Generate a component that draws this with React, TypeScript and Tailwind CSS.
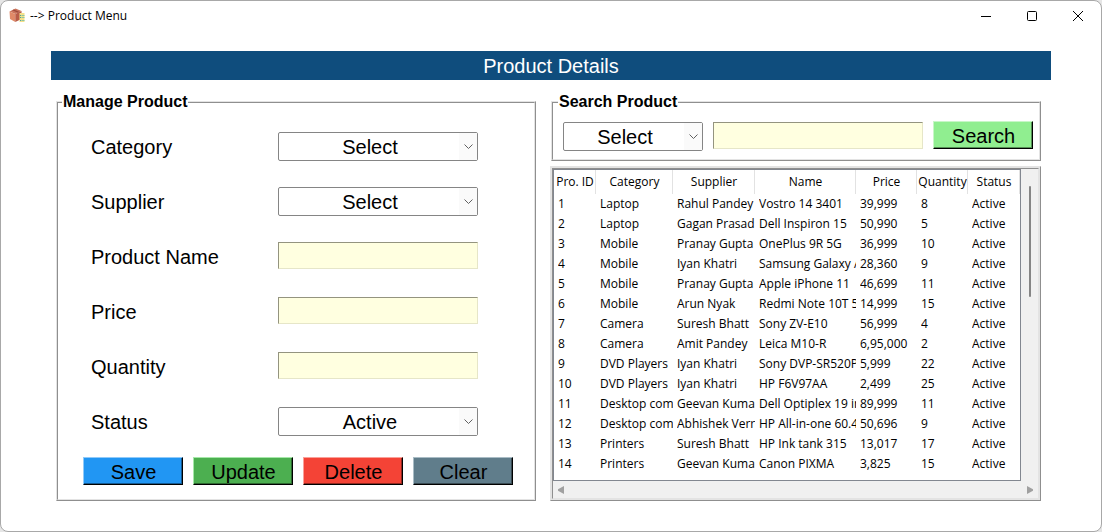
import type { ReactNode } from "react";

const LINE = "border-2 border-[#e3e3e3] [border-style:ridge]";

const products: string[][] = [
  ["1", "Laptop", "Rahul Pandey", "Vostro 14 3401", "39,999", "8", "Active"],
  ["2", "Laptop", "Gagan Prasad", "Dell Inspiron 15", "50,990", "5", "Active"],
  ["3", "Mobile", "Pranay Gupta", "OnePlus 9R 5G", "36,999", "10", "Active"],
  ["4", "Mobile", "Iyan Khatri", "Samsung Galaxy A", "28,360", "9", "Active"],
  ["5", "Mobile", "Pranay Gupta", "Apple iPhone 11", "46,699", "11", "Active"],
  ["6", "Mobile", "Arun Nyak", "Redmi Note 10T 5", "14,999", "15", "Active"],
  ["7", "Camera", "Suresh Bhatt", "Sony ZV-E10", "56,999", "4", "Active"],
  ["8", "Camera", "Amit Pandey", "Leica M10-R", "6,95,000", "2", "Active"],
  ["9", "DVD Players", "Iyan Khatri", "Sony DVP-SR520P", "5,999", "22", "Active"],
  ["10", "DVD Players", "Iyan Khatri", "HP F6V97AA", "2,499", "25", "Active"],
  ["11", "Desktop com", "Geevan Kuma", "Dell Optiplex 19 in", "89,999", "11", "Active"],
  ["12", "Desktop com", "Abhishek Verr", "HP All-in-one 60.4", "50,696", "9", "Active"],
  ["13", "Printers", "Suresh Bhatt", "HP Ink tank 315", "13,017", "17", "Active"],
  ["14", "Printers", "Geevan Kuma", "Canon PIXMA", "3,825", "15", "Active"],
];

const columns = ["Pro. ID", "Category", "Supplier", "Name", "Price", "Quantity", "Status"];

function Combo({ id, label, value, options }: { id: string; label?: string; value: string; options: string[] }) {
  return (
    <div className="relative h-[29px] w-full">
      <select
        id={id}
        aria-label={label}
        defaultValue={value}
        className="h-full w-full appearance-none rounded-xs border border-[#858585] bg-white pr-4 text-xl leading-6 text-black [text-align-last:center]"
      >
        {options.map((o) => (
          <option key={o}>{o}</option>
        ))}
      </select>
      <span className="pointer-events-none absolute inset-y-px right-px flex w-[18px] items-center justify-center bg-[#fafafa] pl-px">
        <svg width="9" height="5" viewBox="0 0 9 5" fill="none" stroke="#606060" strokeWidth="1">
          <path d="M0.5 0.5l4 4 4-4" />
        </svg>
      </span>
    </div>
  );
}

function Entry({ id, label }: { id: string; label?: string }) {
  return (
    <input
      id={id}
      aria-label={label}
      type="text"
      className="block h-[27px] w-full min-w-0 border border-t-[#94947f] border-r-[#e6e6c8] border-b-[#e6e6c8] border-l-[#94947f] bg-[#ffffe0] px-1 text-xl leading-6"
    />
  );
}

function ReliefButton({ color, children }: { color: string; children: ReactNode }) {
  return (
    <button
      type="button"
      className={`h-7 w-[100px] border border-r-black border-b-black pt-0.5 pl-px text-center text-xl leading-6 text-black ${color}`}
    >
      {children}
    </button>
  );
}

function Field({ id, label, children }: { id: string; label: string; children: ReactNode }) {
  return (
    <div className="flex h-[29px] items-start">
      <label htmlFor={id} className="w-[187px] text-xl leading-[31px]">
        {label}
      </label>
      <div className="w-[200px]">{children}</div>
    </div>
  );
}

function AppIcon() {
  return (
    <svg width="17" height="16" viewBox="0 0 17 16">
      <path d="M0.5 3.5L6.5 0.5l6 2.5-6.2 3z" fill="#c9735a" />
      <path d="M0.5 3.5l5.8 2.5v8L1 11z" fill="#e08a68" />
      <path d="M6.3 6l6.2-3v8l-6.2 3z" fill="#b85c47" />
      <path d="M3.2 2.3L9.1 4.8l1.3-.7L4.8 1.4z" fill="#9c4a3c" />
      <path d="M10.5 5h5v9h-5z" fill="#f5e08a" />
      <path d="M11 7.5h1M11 9.5h1M11 12.5h1" stroke="#4fa39a" />
      <path d="M12.5 7.5h3M12.5 9.5h3M12.5 12.5h3" stroke="#8fc7a0" />
    </svg>
  );
}

function TitleBar() {
  const button = "flex h-[30px] w-[46px] items-center justify-center";
  return (
    <header className="flex h-[30px] items-center pl-2">
      <AppIcon />
      <h1 className="ml-1 flex-1 font-['Open_Sans','Noto_Sans',sans-serif] text-xs">--&gt; Product Menu</h1>
      <button type="button" aria-label="Minimize" className={button}>
        <svg width="10" height="10" viewBox="0 0 10 10" stroke="#000">
          <path d="M0 5.5h10" />
        </svg>
      </button>
      <button type="button" aria-label="Maximize" className={button}>
        <svg width="10" height="10" viewBox="0 0 10 10" fill="none" stroke="#000">
          <rect x="0.5" y="0.5" width="9" height="9" rx="1" />
        </svg>
      </button>
      <button type="button" aria-label="Close" className={button}>
        <svg width="10" height="10" viewBox="0 0 10 10" stroke="#000">
          <path d="M0 0l10 10M10 0L0 10" />
        </svg>
      </button>
    </header>
  );
}

function ManageProduct() {
  return (
    <fieldset className={`${LINE} min-w-0 pb-3.5`}>
      <legend className="ml-1 px-px text-base leading-5 font-bold">Manage Product</legend>
      <div className="flex flex-col gap-[26px] pt-5 pl-[33px]">
        <Field id="category" label="Category">
          <Combo id="category" value="Select" options={["Select", "Laptop", "Mobile", "Camera", "Printers"]} />
        </Field>
        <Field id="supplier" label="Supplier">
          <Combo id="supplier" value="Select" options={["Select", "Rahul Pandey", "Gagan Prasad", "Iyan Khatri"]} />
        </Field>
        <Field id="name" label="Product Name">
          <Entry id="name" />
        </Field>
        <Field id="price" label="Price">
          <Entry id="price" />
        </Field>
        <Field id="quantity" label="Quantity">
          <Entry id="quantity" />
        </Field>
        <Field id="status" label="Status">
          <Combo id="status" value="Active" options={["Active", "Inactive"]} />
        </Field>
      </div>
      <div className="mt-[21px] flex gap-2.5 pl-[25px]">
        <ReliefButton color="border-t-[#90caf9] border-l-[#90caf9] bg-[#2196f3] shadow-[inset_-1px_-1px_0_#145a92]">
          Save
        </ReliefButton>
        <ReliefButton color="border-t-[#a5e8a8] border-l-[#a5e8a8] bg-[#4caf50] shadow-[inset_-1px_-1px_0_#2e6930]">
          Update
        </ReliefButton>
        <ReliefButton color="border-t-[#faa099] border-l-[#faa099] bg-[#f44336] shadow-[inset_-1px_-1px_0_#922820]">
          Delete
        </ReliefButton>
        <ReliefButton color="border-t-[#a9bcc5] border-l-[#a9bcc5] bg-[#607d8b] shadow-[inset_-1px_-1px_0_#3a4b53]">
          Clear
        </ReliefButton>
      </div>
    </fieldset>
  );
}

function SearchProduct() {
  return (
    <fieldset className={`${LINE} ml-px min-w-0`}>
      <legend className="ml-[5px] px-px text-base leading-5 font-bold">Search Product</legend>
      <div className="flex items-start gap-2.5 pt-[9px] pr-1.5 pb-2 pl-2.5">
        <div className="mt-px w-[140px]">
          <Combo id="search-by" label="Search by" value="Select" options={["Select", "Category", "Supplier", "Name"]} />
        </div>
        <div className="mt-px min-w-0 flex-1">
          <Entry id="search-text" label="Search text" />
        </div>
        <ReliefButton color="border-t-[#c8f7c8] border-l-[#c8f7c8] bg-[#90ee90] shadow-[inset_-1px_-1px_0_#568f56]">
          Search
        </ReliefButton>
      </div>
    </fieldset>
  );
}

function ProductTable() {
  return (
    <div className="flex flex-1 flex-col border-[3px] border-[#e3e3e3] [border-style:ridge]">
      <div className="flex flex-1 bg-[#f0f0f0]">
        <div className="min-w-0 flex-1 border border-[#828790] bg-white pb-1.5">
          <table className="w-full table-fixed border-collapse font-['Open_Sans','Noto_Sans',sans-serif] text-xs">
            <colgroup>
              <col className="w-[42px]" />
              <col className="w-[77px]" />
              <col className="w-[82px]" />
              <col className="w-[101px]" />
              <col className="w-[61px]" />
              <col className="w-[51px]" />
              <col className="w-[52px]" />
            </colgroup>
            <thead>
              <tr className="h-6">
                {columns.map((c) => (
                  <th key={c} className="p-0 font-normal">
                    <div className="h-6 overflow-hidden border-r border-[#e2e2e2] pl-px leading-6 whitespace-nowrap">
                      {c}
                    </div>
                  </th>
                ))}
              </tr>
            </thead>
            <tbody>
              {products.map((row) => (
                <tr key={row[0]} className="h-5">
                  {row.map((cell, i) => (
                    <td key={columns[i]} className="py-0 pr-0 pl-1">
                      <div className="overflow-hidden leading-5 whitespace-nowrap">{cell}</div>
                    </td>
                  ))}
                </tr>
              ))}
            </tbody>
          </table>
        </div>
        <div className="flex w-[17px] justify-center pt-[17px]">
          <div className="h-[111px] w-0.5 rounded-full bg-[#858585]" />
        </div>
      </div>
      <div className="flex h-[17px] items-center justify-between bg-[#f0f0f0] px-[5px]">
        <svg width="6" height="8" viewBox="0 0 6 8" fill="#a0a0a0">
          <path d="M6 0v8L0 4.8V3.2z" />
        </svg>
        <svg width="6" height="8" viewBox="0 0 6 8" fill="#a0a0a0">
          <path d="M0 0v8l6-3.2V3.2z" />
        </svg>
      </div>
    </div>
  );
}

export default function App() {
  return (
    <div className="flex min-h-screen bg-[#e6e6e6] font-['Liberation_Sans',Arial,sans-serif] text-black">
      <div className="flex-1 rounded-lg border border-[#a8a8a8] bg-white pb-[30px]">
        <TitleBar />
        <main className="mx-[50px] mt-5">
          <h2 className="bg-[#0f4d7d] pt-0.5 text-center text-xl leading-[27px] text-white">Product Details</h2>
          <div className="mt-3 grid grid-cols-[480fr_491fr] gap-3.5 pr-2.5 pl-[5px]">
            <ManageProduct />
            <div className="flex min-w-0 flex-col gap-[5px]">
              <SearchProduct />
              <ProductTable />
            </div>
          </div>
        </main>
      </div>
    </div>
  );
}
